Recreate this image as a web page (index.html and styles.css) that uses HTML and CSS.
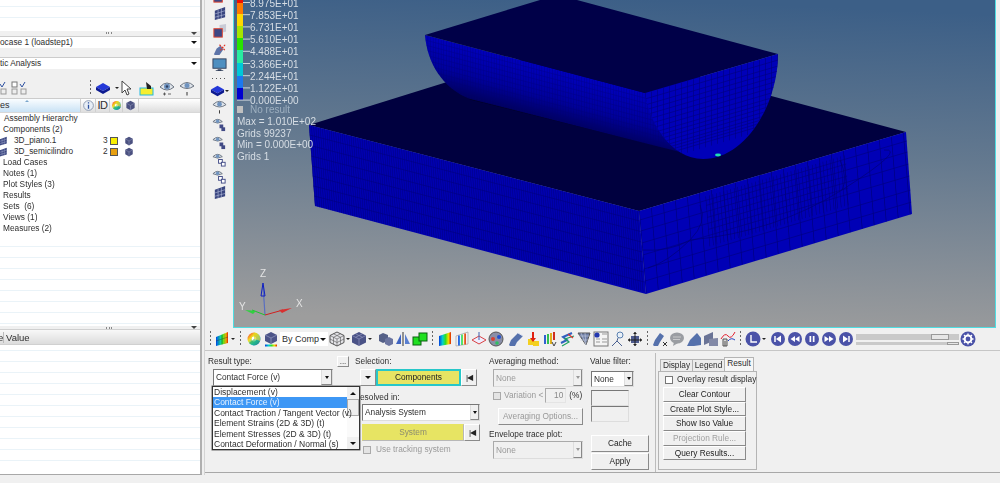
FILE: index.html
```html
<!DOCTYPE html>
<html lang="en">
<head>
<meta charset="utf-8">
<title>HyperView contour</title>
<link rel="stylesheet" href="styles.css">
</head>
<body>
<svg class="defs" aria-hidden="true">
  <defs>
    <linearGradient id="rb" x1="0" x2="1" y1="0" y2="0"><stop offset="0" stop-color="#0040e0"/><stop offset=".3" stop-color="#00d0d0"/><stop offset=".55" stop-color="#30e020"/><stop offset=".78" stop-color="#f0e000"/><stop offset="1" stop-color="#e02000"/></linearGradient>
    <linearGradient id="wheel" x1="0" x2="1" y1="0" y2="1"><stop offset="0" stop-color="#ff2030"/><stop offset=".35" stop-color="#f0e020"/><stop offset=".65" stop-color="#20c0f0"/><stop offset="1" stop-color="#4030d0"/></linearGradient>
    <symbol id="mesh" viewBox="0 0 16 16"><path d="M3 5 14 1V12L3 15Z" fill="#39457f"/><path d="M6.5 4V14M10 2.600V13M3 8.500 14 5M3 12 14 9" stroke="#b9c2e0" stroke-width=".6" fill="none"/></symbol>
    <symbol id="meshsel" viewBox="0 0 16 16"><path d="M8 1 15 0V8L8 10Z" fill="#c9cbd6"/><rect x="2" y="5" width="9" height="9" fill="#3c4785" stroke="#e4452e"/></symbol>
    <symbol id="arrow" viewBox="0 0 16 16"><path d="M2 14 5 8 9 5 12 9 8 15H3Z" fill="#5d74a8"/><path d="M8 4 14 10M14 4 9 10" stroke="#e03020" stroke-width="1.200" stroke-dasharray="2 1"/></symbol>
    <symbol id="monitor" viewBox="0 0 16 16"><rect x="1" y="2" width="14" height="10" fill="#4e8fc0" stroke="#33415c"/><path d="M6 13H10V14H12V15H4V14H6Z" fill="#33415c"/></symbol>
    <symbol id="cube" viewBox="0 0 16 16"><path d="M8 3 15 7 8 11 1 7Z" fill="#2438d8"/><path d="M1 7V10L8 14 15 10V7L8 11Z" fill="#0c1a90"/></symbol>
    <symbol id="eye" viewBox="0 0 16 16"><path d="M1 7Q8-1 15 7 8 13 1 7Z" fill="#dfe4ea" stroke="#6a7380"/><circle cx="8" cy="6.500" r="3" fill="#6f93bf"/><circle cx="8" cy="6.500" r="1.200" fill="#2f3f60"/><path d="M4 14H7M5.500 12.500V15.500M9 14H12" stroke="#444" stroke-width=".8"/></symbol>
    <symbol id="eyeone" viewBox="0 0 16 16"><path d="M1 6Q8-1 15 6 8 11 1 6Z" fill="#dfe4ea" stroke="#6a7380"/><circle cx="8" cy="5.500" r="2.500" fill="#6f93bf"/><path d="M8 12V15.500" stroke="#333"/></symbol>
    <symbol id="eyebox" viewBox="0 0 16 16"><path d="M1 5Q6 0 11 5 6 8 1 5Z" fill="#dfe4ea" stroke="#6a7380"/><circle cx="6" cy="4.500" r="1.800" fill="#6f93bf"/><rect x="8" y="8" width="4" height="4" fill="#414a86"/><rect x="10" y="11" width="4" height="4" fill="#414a86"/></symbol>
    <symbol id="eyeboxes" viewBox="0 0 16 16"><path d="M1 5Q6 0 11 5 6 8 1 5Z" fill="#dfe4ea" stroke="#6a7380"/><circle cx="6" cy="4.500" r="1.800" fill="#6f93bf"/><rect x="7" y="8" width="4" height="4" fill="#fff" stroke="#414a86"/><rect x="10" y="11" width="4" height="4" fill="#fff" stroke="#414a86"/></symbol>
    <symbol id="contour" viewBox="0 0 16 16"><path d="M2 6 14 1V12L2 15Z" fill="url(#rb)"/><path d="M5 5V14M8 4V13.500M11 2.500V13M2 10 14 6" stroke="#333" stroke-width=".4"/></symbol>
    <symbol id="wheelic" viewBox="0 0 16 16"><circle cx="8" cy="8" r="6.500" fill="url(#wheel)"/><circle cx="8" cy="8" r="2.400" fill="#fff"/><path d="M8 8V1.500A6.500 6.500 0 0 1 14 10Z" fill="#e0d020" opacity=".7"/><path d="M8 8 14 10A6.500 6.500 0 0 1 3 12Z" fill="#20b050" opacity=".6"/></symbol>
    <symbol id="compcube" viewBox="0 0 16 16"><path d="M8 1 14 4V10L8 13 2 10V4Z" fill="#4c5488"/><path d="M2 4 8 7 14 4M8 7V13" stroke="#a2a8cc" stroke-width=".6" fill="none"/><rect x="2" y="13.500" width="12" height="2" fill="url(#rb)"/></symbol>
    <symbol id="wire" viewBox="0 0 16 16"><path d="M8 1 15 4.500V11.500L8 15 1 11.500V4.500Z" fill="#e4e4e8" stroke="#555"/><path d="M1 4.500 8 8 15 4.500M8 8V15M4.500 2.800 11.500 6.300V13.300M11.500 2.800 4.500 6.300V13.300M1 8 8 11.500 15 8" stroke="#555" stroke-width=".6" fill="none"/></symbol>
    <symbol id="solid" viewBox="0 0 16 16"><path d="M8 1 15 4.500V11.500L8 15 1 11.500V4.500Z" fill="#4a5286"/><path d="M1 4.500 8 8 15 4.500M8 8V15M4.500 2.800 11.500 6.300M11.500 2.800 4.500 6.300" stroke="#9aa0c8" stroke-width=".6" fill="none"/></symbol>
    <symbol id="twocube" viewBox="0 0 16 16"><path d="M5 2 10 4V10L5 12 1 10V4Z" fill="#556088"/><path d="M11 6 15 8V13L11 15 7 13V8Z" fill="#6b75a0"/></symbol>
    <symbol id="mirror" viewBox="0 0 16 16"><path d="M1 13 6 3V13Z" fill="#3f63c0"/><path d="M10 3 15 13H10Z" fill="#5a7fd0"/><path d="M8 1V15" stroke="#333"/></symbol>
    <symbol id="green" viewBox="0 0 16 16"><rect x="1" y="6" width="8" height="8" fill="#20e020" stroke="#0a6010"/><rect x="7" y="2" width="8" height="8" fill="#20e020" stroke="#0a6010"/></symbol>
    <symbol id="rainbow" viewBox="0 0 16 16"><path d="M2 5 14 1V13L2 15Z" fill="url(#rb)"/></symbol>
    <symbol id="rainout" viewBox="0 0 16 16"><path d="M2 5 14 1V13L2 15Z" fill="#f2f2f2" stroke="#999" stroke-width=".6"/><path d="M5 4.500V14.500M8 3.500V14M11 2.500V13.500" stroke="url(#rb)" stroke-width="1.600"/></symbol>
    <symbol id="diamond" viewBox="0 0 16 16"><path d="M8 5 15 9 8 13 1 9Z" fill="#eef" stroke="#d84040"/><path d="M8 1V9" stroke="#4060b0"/></symbol>
    <symbol id="sphere" viewBox="0 0 16 16"><circle cx="8" cy="8" r="7" fill="#8a8fa8" stroke="#555"/><circle cx="5" cy="8" r="2" fill="#d84030"/><circle cx="11" cy="6" r="2" fill="#2050d0"/><circle cx="9" cy="12" r="1.800" fill="#30c060"/></symbol>
    <symbol id="bend" viewBox="0 0 16 16"><path d="M1 14 3 9 10 2 15 5 9 11 7 15H2Z" fill="#5571ac"/><path d="M10 2 15 5" stroke="#d8e0f0"/></symbol>
    <symbol id="force" viewBox="0 0 16 16"><rect x="3" y="8" width="6" height="6" fill="#f4d020"/><rect x="8" y="10" width="6" height="5" fill="#f4d020"/><path d="M8 1V9" stroke="#e02010" stroke-width="2"/><path d="M5 7H11L8 11Z" fill="#e02010"/></symbol>
    <symbol id="barsv" viewBox="0 0 16 16"><path d="M2 4H4V13H2Z" fill="#3060d0"/><path d="M5 3H7V13H5Z" fill="#30c050"/><path d="M8 2H10V13H8Z" fill="#e0b020"/><path d="M11 1H13V9H11Z" fill="#d03020"/><path d="M10 11 12 15 14 11" stroke="#444" fill="none"/></symbol>
    <symbol id="swirl" viewBox="0 0 16 16"><path d="M2 12 8 9 4 6 13 2" stroke="#3060c0" stroke-width="2" fill="none"/><path d="M3 15 10 11 6 8 15 5" stroke="#20a060" stroke-width="1.200" fill="none"/><path d="M9 3 14 7" stroke="#e03030" stroke-width="1.200"/></symbol>
    <symbol id="section" viewBox="0 0 16 16"><path d="M2 2H14L10 14Z" fill="#6f7fa5" stroke="#555"/><path d="M5 2 10 14M9 2 10 14M3 5 13 5M4 9H12" stroke="#c8cfe0" stroke-width=".6"/></symbol>
    <symbol id="info" viewBox="0 0 16 16"><rect x="1" y="1" width="14" height="14" fill="#f4f4f4" stroke="#777"/><circle cx="4" cy="4" r="2.600" fill="#2438b0"/><path d="M9 3H14M3 8H7M9 8H14M3 11H7M9 11H14" stroke="#999"/></symbol>
    <symbol id="person" viewBox="0 0 16 16"><circle cx="10" cy="4" r="3" fill="#e8f0f8" stroke="#5a80b0"/><path d="M8 7 7 10 2 15M7 10 12 15" stroke="#4a6090" fill="none"/></symbol>
    <symbol id="move" viewBox="0 0 16 16"><rect x="4" y="5" width="8" height="7" fill="#4f5c90"/><path d="M1 9H15M8 1V15" stroke="#222"/><path d="M1 9 3 7V11ZM15 9 13 7V11ZM8 1 6 3H10ZM8 15 6 13H10Z" fill="#222"/></symbol>
    <symbol id="bendx" viewBox="0 0 16 16"><path d="M1 14 3 9 8 2 12 5 8 11 6 15H2Z" fill="#5571ac"/><path d="M11 11 15 15M15 11 11 15" stroke="#333"/></symbol>
    <symbol id="bubble" viewBox="0 0 16 16"><ellipse cx="8" cy="7" rx="7" ry="5.500" fill="#9a9da2"/><path d="M5 11 4 15 9 12Z" fill="#9a9da2"/><path d="M4 6H12M4 8.500H11" stroke="#ddd" stroke-width=".7"/></symbol>
    <symbol id="bend2" viewBox="0 0 16 16"><path d="M1 15 4 9 11 2 15 7V14L8 15Z" fill="#5571ac"/></symbol>
    <symbol id="sheets" viewBox="0 0 16 16"><path d="M1 5 10 1V10L1 14Z" fill="#6a7496"/><path d="M6 8 15 7V15H6Z" fill="#8289a6"/></symbol>
    <symbol id="chart" viewBox="0 0 16 16"><path d="M3 8H7V15H3Z" fill="#d8d8d8" stroke="#555"/><path d="M5 10V15" stroke="#555"/><path d="M1 8Q5 1 8 5T15 1" stroke="#e02030" fill="none"/><path d="M8 10Q11 6 15 9" stroke="#2040c0" fill="none"/></symbol>
    <symbol id="tclock" viewBox="0 0 16 16"><circle cx="8" cy="8" r="7.500" fill="#4a52a8"/><path d="M6 4V11H12" stroke="#fff" stroke-width="1.400" fill="none"/></symbol>
    <symbol id="first" viewBox="0 0 16 16"><circle cx="8" cy="8" r="7" fill="#4a52a8"/><path d="M5 5V11" stroke="#fff" stroke-width="1.500"/><path d="M11 4.500V11.500L6 8Z" fill="#fff"/></symbol>
    <symbol id="rew" viewBox="0 0 16 16"><circle cx="8" cy="8" r="7" fill="#4a52a8"/><path d="M8 5V11L3.500 8ZM12.500 5V11L8 8Z" fill="#fff"/></symbol>
    <symbol id="pause" viewBox="0 0 16 16"><circle cx="8" cy="8" r="7" fill="#4a52a8"/><path d="M5.500 5H7.200V11H5.500ZM8.800 5H10.500V11H8.800Z" fill="#fff"/></symbol>
    <symbol id="ffw" viewBox="0 0 16 16"><circle cx="8" cy="8" r="7" fill="#4a52a8"/><path d="M3.500 5V11L8 8ZM8 5V11L12.500 8Z" fill="#fff"/></symbol>
    <symbol id="last" viewBox="0 0 16 16"><circle cx="8" cy="8" r="7" fill="#4a52a8"/><path d="M11 5V11" stroke="#fff" stroke-width="1.500"/><path d="M5 4.500V11.500L10 8Z" fill="#fff"/></symbol>
    <symbol id="gear" viewBox="0 0 16 16"><circle cx="8" cy="8" r="7.500" fill="#4a52a8"/><circle cx="8" cy="8" r="3.400" fill="none" stroke="#fff" stroke-width="2"/><path d="M8 2.500V5M8 11V13.500M2.500 8H5M11 8H13.500M4 4 5.700 5.700M10.300 10.300 12 12M12 4 10.300 5.700M5.700 10.300 4 12" stroke="#fff" stroke-width="1.300"/></symbol>
    <symbol id="yellowsel" viewBox="0 0 16 16"><rect x="1" y="8" width="13" height="7" fill="#f6ee30" stroke="#20b8e0"/><path d="M7 2 12 6V9H8Z" fill="#222"/></symbol>
    <symbol id="cursor" viewBox="0 0 16 16"><path d="M3 1V13L6 10 8 15 10 14 8 9H12Z" fill="#fff" stroke="#444"/></symbol>
    <symbol id="smallcube" viewBox="0 0 16 16"><path d="M8 1 14 4.500V11.500L8 15 2 11.500V4.500Z" fill="#4b5180"/><path d="M2 4.500 8 8 14 4.500M8 8V15" stroke="#9aa0c4" stroke-width=".7" fill="none"/></symbol>
    <symbol id="glass" viewBox="0 0 16 16"><circle cx="8" cy="8" r="6" fill="#e8eef6" stroke="#7d8da6"/><path d="M8 4V5.500M8 7V12" stroke="#2c50a0" stroke-width="1.600"/></symbol>
    <symbol id="checks" viewBox="0 0 16 16"><rect x="1" y="2" width="5" height="5" fill="#fff" stroke="#777"/><rect x="1" y="9" width="5" height="5" fill="#eee" stroke="#999"/><path d="M9 4 11 7 14 2" stroke="#2c50a0" fill="none"/><rect x="10" y="9" width="5" height="5" fill="#eee" stroke="#999"/></symbol>
    <linearGradient id="bg" x1=".55" y1="0" x2=".45" y2="1"><stop offset="0" stop-color="#3c5f87"/><stop offset=".45" stop-color="#64798f"/><stop offset="1" stop-color="#9d9d9d"/></linearGradient>
    <linearGradient id="cyl" gradientUnits="userSpaceOnUse" x1="552" y1="62" x2="535" y2="124"><stop offset="0" stop-color="#0000c4"/><stop offset=".55" stop-color="#00009c"/><stop offset="1" stop-color="#000048"/></linearGradient>
    <clipPath id="clipFace"><path d="M639 211 906 132 912 214 646 294Z"/></clipPath>
    <clipPath id="clipCyl"><path d="M425 35 645 93C648 112 660 138 684 153L470 99C442 88 427 62 425 35Z"/></clipPath>
    <clipPath id="clipCap"><path d="M645 93 778 54C778 105 745 159 703 159 670 159 648 120 645 93Z"/></clipPath>
  </defs>
</svg>
<div class="app">
  <aside class="side">
    <div class="stripes stripes-top"></div>
    <div class="handle"><span class="dots3"></span><span class="tri"></span></div>
    <div class="combo-row"><div class="combo"><span>ocase 1 (loadstep1)</span><span class="tri tri-k"></span></div></div>
    <div class="combo-row"><div class="combo"><span>tic Analysis</span><span class="tri tri-k"></span></div></div>
    <div class="side-tools">
      <svg class="ic i-clip"><use href="#checks"/></svg>
      <svg class="ic"><use href="#checks"/></svg>
      <span class="tools-gap"></span>
      <span class="vdots"></span>
      <svg class="ic"><use href="#cube"/></svg><span class="tri tri-s"></span>
      <svg class="ic i-cursor"><use href="#cursor"/></svg>
      <svg class="ic"><use href="#yellowsel"/></svg>
      <svg class="ic"><use href="#eye"/></svg>
      <svg class="ic"><use href="#eyeone"/></svg>
    </div>
    <div class="tree-head">
      <div class="th th-name"><span>es</span><span class="sort"></span></div>
      <div class="th th-i"><svg class="ic"><use href="#glass"/></svg></div>
      <div class="th th-id">ID</div>
      <div class="th th-c"><svg class="ic ic-s"><use href="#wheelic"/></svg></div>
      <div class="th th-c th-c2"><svg class="ic ic-s"><use href="#smallcube"/></svg></div>
      <div class="th th-fill"></div>
    </div>
    <div class="tree">
      <div class="row r1">Assembly Hierarchy</div>
      <div class="row">Components (2)</div>
      <div class="row r2"><svg class="mini"><use href="#mesh"/></svg><span class="nm">3D_piano.1</span><span class="idn">3</span><span class="sw sw-y"></span><svg class="mini2"><use href="#smallcube"/></svg></div>
      <div class="row r2"><svg class="mini"><use href="#mesh"/></svg><span class="nm">3D_semicilindro</span><span class="idn">2</span><span class="sw sw-o"></span><svg class="mini2"><use href="#smallcube"/></svg></div>
      <div class="row">Load Cases</div>
      <div class="row">Notes (1)</div>
      <div class="row">Plot Styles (3)</div>
      <div class="row">Results</div>
      <div class="row">Sets&nbsp; (6)</div>
      <div class="row">Views (1)</div>
      <div class="row">Measures (2)</div>
    </div>
    <div class="stripes stripes-mid"></div>
    <div class="handle handle-2"><span class="dots3"></span><span class="tri"></span></div>
    <div class="val-head"><span class="vh-a">e</span><span class="vh-b">Value</span></div>
    <div class="stripes stripes-bot"></div>
  </aside>
  <main class="main">
    <div class="upper">
      <nav class="strip">
        <div class="slot h4"><svg class="ic"><use href="#meshsel"/></svg></div>
        <div class="slot h18"><svg class="ic"><use href="#mesh"/></svg></div>
        <div class="slot h18"><svg class="ic"><use href="#meshsel"/></svg></div>
        <div class="slot h16"><svg class="ic"><use href="#arrow"/></svg></div>
        <div class="slot h16"><svg class="ic"><use href="#monitor"/></svg></div>
        <div class="slot h12"><span class="hdots"></span></div>
        <div class="slot h13"><svg class="ic"><use href="#cube"/></svg><span class="tri tri-s"></span></div>
        <div class="slot h18"><svg class="ic"><use href="#eyeone"/></svg></div>
        <div class="slot h18"><svg class="ic"><use href="#eyebox"/></svg></div>
        <div class="slot h18"><svg class="ic"><use href="#eyebox"/></svg></div>
        <div class="slot h17"><svg class="ic"><use href="#eyeboxes"/></svg></div>
        <div class="slot h16"><svg class="ic"><use href="#eyeboxes"/></svg></div>
        <div class="slot h16"><svg class="ic"><use href="#mesh"/></svg></div>
      </nav>
      <div class="view">
        <svg class="scene" viewBox="234 0 761 327">
          <rect x="234" y="0" width="761" height="327" fill="url(#bg)"/>
          <!-- lower block -->
          <path d="M309 125 572 43 906 132 639 211Z" fill="#00003f"/>
          <path d="M309 125 639 211 646 294 315 206Z" fill="#0000b0"/>
          <g transform="matrix(1 .2606 .074 1 309 125)">
            <path d="M0 40.500H330" stroke="#000080" stroke-width="81" stroke-dasharray=".5 1.700"/>
            <path d="M0 10H330M0 20.500H330M0 31H330M0 41H330M0 51H330M0 61H330M0 71H330" stroke="#000080" stroke-width=".6"/>
          </g>
          <path d="M639 211 906 132 912 214 646 294Z" fill="#0000b6"/>
          <g clip-path="url(#clipFace)">
            <g transform="matrix(1 -.296 .084 1 639 211)">
              <path d="M0 41H267" stroke="#000080" stroke-width="82" stroke-dasharray=".7 11.300"/>
              <path d="M66 30H206" stroke="#000080" stroke-width="50" stroke-dasharray=".55 3"/>
              <path d="M0 9H267M66 14H206M0 20H267M66 26H206M0 32H267M66 38H206M0 44H267M0 58H267M0 70H267" stroke="#000080" stroke-width=".6"/>
            </g>
            <path d="M690 240Q776 232 842 190T884 150M700 205Q708 222 690 240Q668 262 648 268M840 160Q848 178 842 190M641 250Q670 252 690 240" fill="none" stroke="#000078" stroke-width=".7"/>
          </g>
          <!-- half cylinder -->
          <path d="M470 98 680 150" stroke="#000018" stroke-width="3" opacity=".7"/>
          <path d="M425 35 645 93C648 112 660 138 684 153L470 99C442 88 427 62 425 35Z" fill="url(#cyl)"/>
          <g clip-path="url(#clipCyl)">
            <g transform="matrix(1 .264 0 1 425 35)" opacity=".55">
              <path d="M0 35H240" stroke="#000070" stroke-width="70" stroke-dasharray=".45 2.200"/>
              <path d="M0 5H240M0 10H240M0 15H240M0 20H240M0 25H240M0 30H240M0 35H240M0 40H240M0 45H240M0 50H240" stroke="#000070" stroke-width=".5"/>
            </g>
          </g>
          <path d="M425 35 540 0H577L778 54 645 93Z" fill="#000048"/>
          <path d="M645 93 778 54C778 105 745 159 703 159 670 159 648 120 645 93Z" fill="#0000b8"/>
          <g clip-path="url(#clipCap)">
            <g transform="matrix(1 -.293 0 1 645 93)">
              <path d="M0 36H135" stroke="#000080" stroke-width="72" stroke-dasharray=".6 5.400"/>
              <path d="M0 6H135M0 12H135M0 17H135M0 22H135M0 27H135M0 32H135M0 37H135M0 42H135M0 46H135M0 50H135M0 54H135M0 58H135M0 61H135M0 64H135M0 67H135" stroke="#000080" stroke-width=".6"/>
            </g>
          </g>
          <ellipse cx="718" cy="155" rx="3" ry="1.400" fill="#20e0b0"/>
          <!-- legend, drawn over the model -->
          <g>
            <rect x="237" y="-8" width="6" height="11" fill="#f01000"/><rect x="237" y="3" width="6" height="11" fill="#ff7a00"/><rect x="237" y="14" width="6" height="12" fill="#ffd800"/><rect x="237" y="26" width="6" height="12" fill="#a6e600"/><rect x="237" y="38" width="6" height="12" fill="#28e400"/><rect x="237" y="50" width="6" height="13" fill="#28eca0"/><rect x="237" y="63" width="6" height="13" fill="#00c8d8"/><rect x="237" y="76" width="6" height="12" fill="#1c78f0"/><rect x="237" y="88" width="6" height="12" fill="#0000d0"/>
          </g>
          <path d="M243 2.500H250M243 14.700H250M243 26.900H250M243 39.100H250M243 51.300H250M243 63.500H250M243 75.700H250M243 87.900H250M237 100.100H250" stroke="#cfd6dc" stroke-width="1"/>
          <g class="lg">
            <text x="250" y="6.600">8.975E+01</text><text x="250" y="18.800">7.853E+01</text><text x="250" y="31">6.731E+01</text><text x="250" y="43.200">5.610E+01</text><text x="250" y="55.400">4.488E+01</text><text x="250" y="67.600">3.366E+01</text><text x="250" y="79.800">2.244E+01</text><text x="250" y="92">1.122E+01</text><text x="250" y="104.200">0.000E+00</text>
            <rect x="237" y="106" width="6" height="7" fill="#c0c0c0"/>
            <text x="250" y="113" class="faded">No result</text>
            <text x="237" y="125">Max = 1.010E+02</text><text x="237" y="137">Grids 99237</text><text x="237" y="148">Min = 0.000E+00</text><text x="237" y="160">Grids 1</text>
          </g>
          <!-- axes -->
          <path d="M265 315 263 285" stroke="#5a6fc0" stroke-width="1.200"/><path d="M263 283 261 296H265Z" fill="none" stroke="#1020c0"/>
          <path d="M265 315 283 310" stroke="#d02020"/><path d="M292 308 279 310 282 313Z" fill="#d83030"/>
          <path d="M265 315 252 310" stroke="#20c030"/><path d="M245 310 256 311 253 314Z" fill="#30d040"/>
          <text x="260" y="277" class="ax">Z</text><text x="296" y="307" class="ax">X</text><text x="239" y="310" class="ax">Y</text>
        </svg>
      </div>
    </div>
    <div class="toolbar">
      <span class="vdots vd-a"></span>
      <svg class="ic"><use href="#contour"/></svg><span class="tri tri-s"></span>
      <span class="vdots vd-c"></span>
      <svg class="ic"><use href="#wheelic"/></svg>
      <svg class="ic"><use href="#compcube"/></svg>
      <div class="bycomp"><span>By Comp</span><span class="tri tri-k"></span></div>
      <svg class="ic"><use href="#wire"/></svg><span class="tri tri-s"></span>
      <svg class="ic"><use href="#solid"/></svg><span class="tri tri-s"></span>
      <svg class="ic i-m5"><use href="#twocube"/></svg>
      <svg class="ic"><use href="#mirror"/></svg>
      <svg class="ic"><use href="#green"/></svg>
      <span class="vdots vd-b"></span>
      <svg class="ic"><use href="#rainbow"/></svg>
      <svg class="ic"><use href="#rainout"/></svg>
      <svg class="ic"><use href="#diamond"/></svg>
      <svg class="ic"><use href="#sphere"/></svg>
      <svg class="ic i-m3"><use href="#bend"/></svg>
      <svg class="ic"><use href="#force"/></svg>
      <svg class="ic"><use href="#barsv"/></svg>
      <svg class="ic"><use href="#swirl"/></svg>
      <svg class="ic"><use href="#section"/></svg>
      <svg class="ic"><use href="#info"/></svg>
      <svg class="ic"><use href="#person"/></svg>
      <svg class="ic"><use href="#move"/></svg>
      <span class="vdots vd-b"></span>
      <svg class="ic"><use href="#bendx"/></svg>
      <svg class="ic"><use href="#bubble"/></svg>
      <svg class="ic"><use href="#bend2"/></svg>
      <svg class="ic"><use href="#sheets"/></svg>
      <svg class="ic"><use href="#chart"/></svg>
      <span class="vdots vd-b"></span>
      <svg class="ic"><use href="#tclock"/></svg><span class="tri tri-s"></span>
      <svg class="ic i-m3"><use href="#first"/></svg>
      <svg class="ic"><use href="#rew"/></svg>
      <svg class="ic"><use href="#pause"/></svg>
      <svg class="ic"><use href="#ffw"/></svg>
      <svg class="ic"><use href="#last"/></svg>
      <div class="slider"><div class="track t1"><span class="thumb th1"></span></div><div class="track t2"><span class="thumb th2"></span></div></div>
      <svg class="ic"><use href="#gear"/></svg>
    </div>
    <section class="panel">
      <div class="col c1">
        <div class="lbl-row"><span class="lbl">Result type:</span><button class="btn dotsb">...</button></div>
        <div class="sel sel-rt"><span>Contact Force (v)</span><span class="sbtn"><span class="tri tri-k"></span></span></div>
        <div class="popup">
          <ul class="opts">
            <li>Displacement (v)</li>
            <li class="on">Contact Force (v)</li>
            <li>Contact Traction / Tangent Vector (v)</li>
            <li>Element Strains (2D &amp; 3D) (t)</li>
            <li>Element Stresses (2D &amp; 3D) (t)</li>
            <li>Contact Deformation / Normal (s)</li>
          </ul>
          <div class="vs"><span class="vbtn"><span class="tri tri-up"></span></span><span class="vthumb"></span><span class="vfill"></span><span class="vbtn"><span class="tri tri-k"></span></span></div>
        </div>
      </div>
      <div class="col c2">
        <span class="lbl">Selection:</span>
        <div class="sel-row">
          <button class="btn b-drop"><span class="tri tri-k"></span></button>
          <button class="btn b-yellow b-cyan">Components</button>
          <button class="btn b-first">|◀</button>
        </div>
        <span class="lbl lbl-res">esolved in:</span>
        <div class="sel sel-an"><span>Analysis System</span><span class="sbtn"><span class="tri tri-k"></span></span></div>
        <div class="sel-row sr2">
          <button class="btn b-yellow b-sys">System</button>
          <button class="btn b-first">|◀</button>
        </div>
        <label class="chk dis"><span class="box"></span>Use tracking system</label>
      </div>
      <div class="col c3">
        <span class="lbl">Averaging method:</span>
        <div class="sel sel-dis sd-1"><span>None</span><span class="sbtn"><span class="tri tri-g"></span></span></div>
        <div class="var-row"><span class="box"></span><span class="dis-t">Variation &lt;</span><span class="num">10</span><span>(%)</span></div>
        <button class="btn b-avg">Averaging Options...</button>
        <span class="lbl lbl-env">Envelope trace plot:</span>
        <div class="sel sel-dis"><span>None</span><span class="sbtn"><span class="tri tri-g"></span></span></div>
      </div>
      <div class="col c4">
        <span class="lbl">Value filter:</span>
        <div class="sel sel-vf"><span>None</span><span class="sbtn"><span class="tri tri-k"></span></span></div>
        <span class="inp inp-1"></span><span class="inp"></span>
        <button class="btn b-act b-cache">Cache</button>
        <button class="btn b-act b-apply">Apply</button>
      </div>
      <div class="col c5">
        <div class="tabs"><span class="tab t-d">Display</span><span class="tab t-l">Legend</span><span class="tab tab-on">Result</span></div>
        <div class="tabbody">
          <label class="chk"><span class="box box-w"></span>Overlay result display</label>
          <button class="btn b-tab">Clear Contour</button>
          <button class="btn b-tab">Create Plot Style...</button>
          <button class="btn b-tab">Show Iso Value</button>
          <button class="btn b-tab b-off">Projection Rule...</button>
          <button class="btn b-tab">Query Results...</button>
        </div>
      </div>
    </section>
  </main>
</div>
</body>
</html>
```
FILE: styles.css
```css
* { box-sizing: border-box; }
html, body { margin: 0; height: 483px; overflow: hidden; background: #f0f0f0; }
body { font: 8.3px/11px "Liberation Sans", Arial, sans-serif; color: #2e2e2e; }
.defs { position: absolute; width: 0; height: 0; }
.app { display: flex; height: 475px; filter: blur(.3px); }

/* left panel */
.side { width: 202px; flex: none; display: flex; flex-direction: column; background: #f0f0f0; border-right: 2px solid #b0b0b0; border-bottom: 1px solid #a8a8a8; }
.stripes { background-color: #fff; background-image: repeating-linear-gradient(#fff 0 10px, #eaf3f8 10px 11px); }
.stripes-top { height: 31px; flex: none; background-position: 0 -4px; }
.stripes-mid { height: 90px; flex: none; background-position: 0 0; }
.stripes-bot { flex: 1; background-position: 0 -5px; }
.handle { height: 4px; flex: none; display: flex; align-items: center; justify-content: flex-end; gap: 79px; padding-right: 3px; }
.handle-2 { height: 3px; }
.dots3 { width: 6px; height: 2px; background: repeating-linear-gradient(90deg, #888 0 1px, transparent 1px 2.500px); }
.tri { display: inline-block; width: 0; height: 0; border-left: 3.500px solid transparent; border-right: 3.500px solid transparent; border-top: 3.500px solid #444; }
.tri-k { border-top-color: #111; }
.tri-g { border-top-color: #999; border-left-width: 3px; border-right-width: 3px; border-top-width: 3px; }
.tri-s { border-left-width: 2px; border-right-width: 2px; border-top-width: 2.500px; border-top-color: #222; flex: none; }
.tri-up { border-top: 0; border-bottom: 3.500px solid #111; }
.combo-row { height: 21px; padding-top: 1px; flex: none; }
.combo { height: 12px; background: #fff; border-top: 1px solid #ccc; display: flex; align-items: center; justify-content: space-between; padding-right: 3px; }
.side-tools { height: 21px; flex: none; display: flex; align-items: center; gap: 4px; }
.ic { width: 16px; height: 16px; flex: none; }
.ic-s { width: 11px; height: 11px; }
.i-clip { margin-left: -9px; }
.i-cursor { margin-left: -4px; }
.tools-gap { width: 55px; }
.vdots { width: 1px; height: 16px; flex: none; background: repeating-linear-gradient(#666 0 2px, transparent 2px 4px); }
.tree-head { height: 15px; flex: none; display: flex; border-top: 1px solid #ccc; background: linear-gradient(#fff, #dedede); border-bottom: 1px solid #d8d8d8; font-size: 9px; }
.th { display: flex; align-items: center; justify-content: center; border-right: 1px solid #d0d0d0; }
.th-name { width: 81px; justify-content: flex-start; position: relative; background: linear-gradient(#fafdff, #c9e2f5); }
.sort { position: absolute; left: 25px; top: 1px; border-left: 2.500px solid transparent; border-right: 2.500px solid transparent; border-bottom: 2.500px solid #7aa6cc; }
.th-i { width: 15px; }
.th-i .ic { width: 13px; height: 13px; }
.th-id { width: 14px; font-size: 11px; letter-spacing: -.5px; }
.th-c { width: 13px; }
.th-c2 { width: 16px; }
.th-fill { flex: 1; border: 0; }
.tree { height: 123px; flex: none; background: #fff; }
.row { height: 11px; line-height: 11px; padding-left: 3px; white-space: nowrap; display: flex; align-items: center; }
.r1 { padding-left: 4px; }
.r2 { padding-left: 0; }
.mini { width: 10px; height: 10px; margin-left: -2px; flex: none; }
.nm { width: 95px; padding-left: 6px; flex: none; }
.idn { width: 7px; flex: none; }
.sw { width: 8px; height: 8px; flex: none; border: 1px solid #555; }
.sw-y { background: #f8ee00; }
.sw-o { background: #e8a010; }
.mini2 { width: 10px; height: 10px; margin-left: 6px; flex: none; }
.val-head { height: 16px; flex: none; display: flex; align-items: center; background: linear-gradient(#f8f8f8, #dcdcdc); border-top: 1px solid #d0d0d0; border-bottom: 1px solid #d0d0d0; font-size: 9.5px; }
.vh-a { width: 3px; margin-left: -2px; margin-right: 2px; }
.vh-b { padding-left: 2px; border-left: 1px solid #bbb; }

/* main */
.main { flex: 1; min-width: 0; display: flex; flex-direction: column; margin-left: 2px; border-left: 1px solid #d4d4d4; }
.upper { height: 328px; display: flex; flex: none; }
.strip { width: 28px; flex: none; display: flex; flex-direction: column; }
.slot { display: flex; align-items: center; justify-content: center; flex: none; }
.h4 { height: 4px; overflow: hidden; align-items: flex-end; }
.h12 { height: 12px; } .h13 { height: 13px; } .h16 { height: 16px; } .h17 { height: 17px; } .h18 { height: 18px; }
.slot .ic { width: 15px; height: 15px; }
.hdots { width: 14px; height: 1px; background: repeating-linear-gradient(90deg, #555 0 1px, transparent 1px 4px); }
.view { width: 763px; height: 328px; flex: none; border: 1px solid #4fdde2; border-top: 0; }
.scene { display: block; width: 761px; height: 327px; }
.lg text { fill: #d6dde4; font-size: 10px; font-family: "Liberation Sans", Arial, sans-serif; }
.lg text.faded { fill: #9eb0c0; }
.ax { fill: #e4e4e4; font-size: 10px; font-family: "Liberation Sans", Arial, sans-serif; }

/* toolbar */
.toolbar { height: 23px; flex: none; display: flex; align-items: center; gap: 1px; padding-left: 5px; border-bottom: 1px solid #c6c6c6; }
.vd-a { margin-right: 2px; }
.vd-b { margin: 0 3px; }
.vd-c { margin: 0 4px; }
.i-m5 { margin-left: 5px; }
.i-m3 { margin-left: 3px; }
.bycomp { width: 48px; height: 14px; background: #fff; display: flex; align-items: center; justify-content: space-between; padding: 0 2px; font-size: 9px; flex: none; white-space: nowrap; }
.slider { width: 103px; margin: 0 0 0 1px; display: flex; flex-direction: column; gap: 2px; flex: none; }
.track { background: #c9c9c9; position: relative; display: block; }
.t1 { height: 6px; }
.t2 { height: 3px; }
.thumb { position: absolute; top: 0; bottom: 0; background: #e6e6e6; border: 1px solid #999; }
.th1 { left: 75px; width: 18px; }
.th2 { left: 91px; width: 12px; }

/* panel */
.panel { height: 122px; flex: none; display: flex; border-bottom: 1px solid #a8a8a8; padding-left: 3px; }
.col { display: flex; flex-direction: column; flex: none; position: relative; }
.lbl { display: block; height: 11px; white-space: nowrap; }
.btn { font: inherit; color: #222; background: #f0f0f0; border: 1px solid; border-color: #fff #8a8a8a #8a8a8a #fff; padding: 0; white-space: nowrap; display: flex; align-items: center; justify-content: center; flex: none; }
.sel { display: flex; align-items: center; justify-content: space-between; background: #fff; border: 1px solid; border-color: #777 #ddd #ddd #777; padding-left: 2px; white-space: nowrap; flex: none; }
.sbtn { width: 9px; align-self: stretch; background: #f0f0f0; border-left: 1px solid #ddd; border-right: 1px solid #888; border-bottom: 1px solid #888; display: flex; align-items: center; justify-content: center; }
.sbtn .tri { border-left-width: 2.500px; border-right-width: 2.500px; border-top-width: 3px; }

.c1 { width: 147px; padding-top: 4px; }
.lbl-row { display: flex; justify-content: space-between; height: 12px; padding-right: 6px; align-items: center; }
.dotsb { width: 12px; height: 11px; font-size: 8px; align-items: flex-end; line-height: 8px; }
.sel-rt { width: 120px; height: 17px; margin: 2px 0 0 5px; }
.sel-rt .sbtn { width: 11px; }
.popup { position: absolute; left: 4px; top: 35px; width: 148px; height: 64px; background: #fff; border: 1px solid #333; display: flex; z-index: 2; box-shadow: 0 0 0 .5px #666; }
.opts { list-style: none; margin: 0; padding: 0; width: 134px; flex: none; overflow: visible; }
.opts li { height: 10.400px; line-height: 10.400px; white-space: nowrap; padding-left: 1px; font-size: 8.500px; position: relative; }
.opts li.on { background: #3d97f5; color: #e6f2ff; }
.vs { flex: 1; background: #f4f4f4; display: flex; flex-direction: column; }
.vbtn { height: 12px; display: flex; align-items: center; justify-content: center; background: #f0f0f0; flex: none; }
.vthumb { height: 17px; background: #eee; border: 1px solid #aaa; flex: none; }
.vfill { flex: 1; background: #fafafa; }

.c2 { width: 134px; padding-top: 5px; }
.sel-row { display: flex; align-items: stretch; height: 17px; margin: 2px 0 0 5px; flex: none; }
.b-drop { width: 16px; }
.b-yellow { background: #e7e463; }
.b-cyan { width: 85px; border: 2px solid #27c7c9; }
.b-first { width: 16px; font-size: 8px; letter-spacing: -1px; }
.lbl-res { margin: 6px 0 0 5px; }
.sel-an { width: 118px; height: 17px; margin: 1px 0 0 7px; }
.sr2 { margin: 3px 0 0 7px; }
.b-sys { width: 102px; color: #8c8c70; border-color: #e7e463 #b8b8b8 #b8b8b8 #e7e463; }
.chk { display: flex; align-items: center; gap: 5px; height: 11px; white-space: nowrap; }
.c2 .chk { margin: 3px 0 0 8px; }
.dis { color: #9a9a9a; }
.box { width: 8px; height: 8px; flex: none; background: #e4e4e4; border: 1px solid #aaa; }
.box-w { background: #fff; border-color: #777; }

.c3 { width: 101px; padding-top: 5px; }
.sel-dis { width: 90px; height: 18px; margin: 1px 0 0 4px; background: #f0f0f0; color: #999; border-color: #aaa #ddd #ddd #aaa; }
.sd-1 { margin-top: 2px; }
.var-row { display: flex; align-items: center; height: 15px; margin: 1px 0 0 4px; gap: 2px; flex: none; }
.var-row .box { margin-right: 1px; }
.dis-t { color: #9a9a9a; }
.num { width: 21px; height: 15px; border: 1px solid; border-color: #aaa #e4e4e4 #e4e4e4 #aaa; color: #888; text-align: right; padding-right: 2px; line-height: 13px; margin-right: 1px; }
.b-avg { width: 85px; height: 17px; margin: 5px 0 0 9px; color: #999; }
.lbl-env { margin-top: 4px; }

.c4 { width: 66px; padding-top: 5px; }
.sel-vf { width: 43px; height: 16px; margin: 4px 0 0 1px; }
.inp { width: 38px; height: 16px; margin-left: 1px; background: #f0f0f0; border: 1px solid; border-color: #777 #ddd #ddd #888; flex: none; }
.inp-1 { margin-top: 3px; }
.b-act { width: 58px; height: 17px; margin-left: 1px; }
.b-cache { margin-top: 13px; }
.b-apply { margin-top: 1px; }

.c5 { width: 100px; margin-left: 2px; padding-top: 7px; }
.c5::before { content: ""; position: absolute; left: -3px; top: 2px; bottom: 0; width: 1px; background: #bcbcbc; }
.tabs { display: flex; height: 13px; padding-left: 2px; align-items: flex-end; flex: none; }
.tab { height: 12px; border: 1px solid #b4b4b4; border-bottom: 0; background: #ececec; line-height: 11px; white-space: nowrap; text-align: center; }
.t-d { width: 33px; }
.t-l { width: 33px; margin-left: -1px; }
.tab-on { width: 30px; height: 14px; background: #f6f6f6; margin-left: -1px; position: relative; z-index: 1; }
.tabbody { height: 99px; width: 99px; border: 1px solid #b4b4b4; display: flex; flex-direction: column; padding: 2px 0 0 4px; flex: none; }
.tabbody .chk { margin: 0 0 2px 2px; gap: 4px; }
.b-tab { width: 83px; height: 14.700px; }
.b-off { color: #a0a0a0; }
```
